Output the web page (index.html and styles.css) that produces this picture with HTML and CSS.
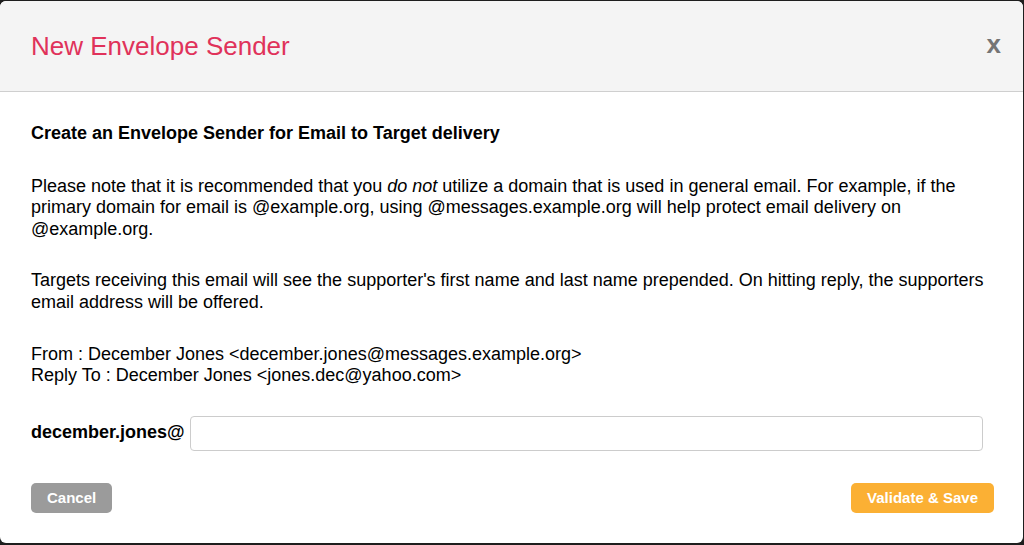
FILE: index.html
```html
<!DOCTYPE html>
<html lang="en">
<head>
  <meta charset="UTF-8" />
  <meta name="viewport" content="width=device-width, initial-scale=1" />
  <title>New Envelope Sender</title>
  <link rel="stylesheet" href="styles.css">
</head>
<body>

<div class="modal">
  <div class="modal-header">
    <h2>New Envelope Sender</h2>
    <span class="close">x</span>
  </div>

  <div class="modal-body">
    <h4>Create an Envelope Sender for Email to Target delivery</h4>

    <p>Please note that it is recommended that you <em>do not</em> utilize a domain that is used in general email. For example, if the primary domain for email is @example.org, using @messages.example.org will help protect email delivery on @example.org.</p>

    <p>Targets receiving this email will see the supporter's first name and last name prepended. On hitting reply, the supporters email address will be offered.</p>

    <p class="addresses">From : December Jones &lt;december.jones@messages.example.org&gt;<br>
    Reply To : December Jones &lt;jones.dec@yahoo.com&gt;</p>

    <div class="field">
      <label for="sender">december.jones@</label>
      <input type="text" id="sender" />
    </div>

    <div class="buttons">
      <button class="btn-cancel">Cancel</button>
      <button class="btn-save">Validate &amp; Save</button>
    </div>
  </div>
</div>

</body>
</html>
```

FILE: styles.css
```css
body {
  font-family: 'Liberation Sans', Arial, sans-serif;
  margin: 0; padding: 1px 1px 1px 0;
  background-color: #1e1e1e;
  color: #000;
}
.modal {
  background: #fff;
  border-radius: 6px;
  height: 542px;
  overflow: hidden;
}
.modal-header {
  background-color: #f4f4f4;
  border-bottom: 1px solid #cfcfcf;
  height: 90px;
  padding: 0 22px 0 31px;
  display: flex;
  align-items: center;
  justify-content: space-between;
}
.modal-header h2 {
  margin: 0;
  font-size: 26px;
  font-weight: normal;
  color: #e0325a;
}
.close {
  font-size: 26px;
  font-weight: bold;
  color: #757575;
  margin-top: -4px;
}
.modal-body {
  padding: 31px 31px 0 31px;
  font-size: 18px;
  line-height: 1.2;
}
.modal-body h4 {
  margin: 0 0 31px;
  font-size: 18px;
}
.modal-body p {
  margin: 0 0 30px;
}
.modal-body p.addresses {
  margin-bottom: 29px;
}
.field {
  display: flex;
  align-items: center;
  gap: 5px;
  margin-right: 9px;
}
.field label {
  font-weight: bold;
}
.field input {
  flex: 1;
  height: 35px;
  border: 1px solid #ccc;
  border-radius: 4px;
  box-sizing: border-box;
}
.buttons {
  display: flex;
  justify-content: space-between;
  margin: 32px -2px 0 0;
}
button {
  color: white;
  font-family: 'Liberation Sans', Arial, sans-serif;
  font-weight: bold;
  font-size: 15px;
  height: 30px;
  padding: 0 16px;
  border: none;
  border-radius: 5px;
  cursor: pointer;
}
.btn-cancel {
  background-color: #9b9b9b;
}
.btn-save {
  background-color: #fbb034;
}
```
